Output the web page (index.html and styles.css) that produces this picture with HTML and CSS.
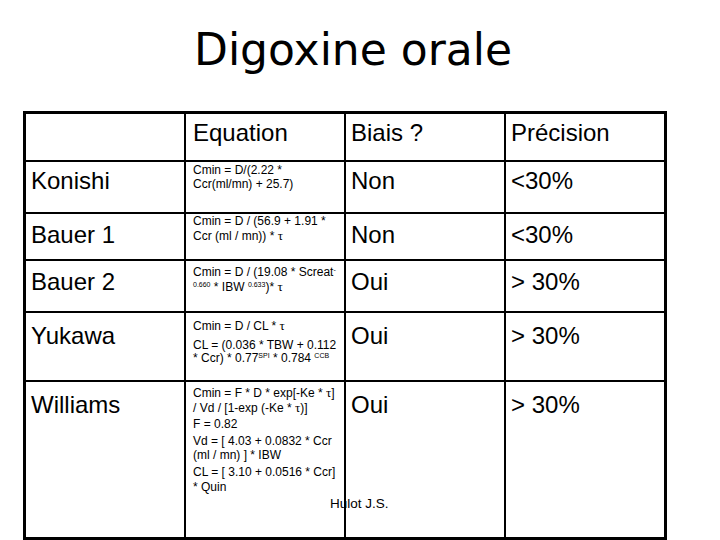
FILE: index.html
```html
<!DOCTYPE html>
<html lang="fr">
<head>
<meta charset="utf-8">
<title>Digoxine orale</title>
<link rel="stylesheet" href="styles.css">
</head>
<body>
<div class="slide">
  <h1 class="title">Digoxine orale</h1>
  <div class="grid">
    <div class="cell big head"></div>
    <div class="cell big head eqcol">Equation</div>
    <div class="cell big head">Biais ?</div>
    <div class="cell big head">Précision</div>

    <div class="cell big row-k">Konishi</div>
    <div class="cell eq eq-k"><p>Cmin = D/(2.22 *<br>Ccr(ml/mn) + 25.7)</p></div>
    <div class="cell big row-k">Non</div>
    <div class="cell big row-k">&lt;30%</div>

    <div class="cell big">Bauer 1</div>
    <div class="cell eq eq-b1"><p>Cmin = D / (56.9 + 1.91 *<br>Ccr (ml / mn)) * <span class="tau">τ</span></p></div>
    <div class="cell big">Non</div>
    <div class="cell big">&lt;30%</div>

    <div class="cell big">Bauer 2</div>
    <div class="cell eq eq-b2"><p>Cmin = D / (19.08 * Screat<sup>-</sup><br><sup>0.660</sup> * IBW <sup>0.633</sup>)* <span class="tau">τ</span></p></div>
    <div class="cell big">Oui</div>
    <div class="cell big">&gt; 30%</div>

    <div class="cell big row-low">Yukawa</div>
    <div class="cell eq eq-y"><p>Cmin = D / CL * <span class="tau">τ</span></p><p class="gap">CL = (0.036 * TBW + 0.112<br>* Ccr) * 0.77<sup>SPI</sup> * 0.784 <sup>CCB</sup></p></div>
    <div class="cell big row-low">Oui</div>
    <div class="cell big row-low">&gt; 30%</div>

    <div class="cell big row-low">Williams</div>
    <div class="cell eq eq-w"><p>Cmin = F * D * exp[-Ke * <span class="tau">τ</span>]<br>/ Vd / [1-exp (-Ke * <span class="tau">τ</span>)]</p><p>F = 0.82</p><p>Vd = [ 4.03 + 0.0832 * Ccr<br>(ml / mn) ] * IBW</p><p>CL = [ 3.10 + 0.0516 * Ccr]<br>* Quin</p></div>
    <div class="cell big row-low">Oui</div>
    <div class="cell big row-low">&gt; 30%</div>
  </div>
  <div class="note">Hulot J.S.</div>
</div>
</body>
</html>
```
FILE: styles.css
```css
html, body {
  margin: 0;
  padding: 0;
  background: #fff;
}
body {
  width: 720px;
  height: 540px;
  overflow: hidden;
  color: #000;
  font-family: "Liberation Sans", Arial, sans-serif;
}
.slide {
  position: relative;
  width: 720px;
  height: 540px;
}
.title {
  margin: 0;
  padding: 25px 0 0 194px;
  height: 50px;
  font-family: "DejaVu Sans", Verdana, sans-serif;
  font-weight: normal;
  font-size: 44px;
  line-height: 50px;
  white-space: nowrap;
}
.grid {
  box-sizing: border-box;
  margin: 36px 0 0 23px;
  width: 644px;
  height: 429px;
  border: 3px solid #000;
  display: grid;
  grid-template-columns: 160px 160px 160px 158px;
  grid-template-rows: 48px 52px 47px 52px 69px 155px;
}
.cell {
  box-sizing: border-box;
  border-right: 2px solid #000;
  border-bottom: 2px solid #000;
  padding: 0 0 0 5px;
  overflow: visible;
}
.cell:nth-child(4n) {
  border-right: none;
}
.cell:nth-last-child(-n+4) {
  border-bottom: none;
}
.big {
  font-size: 24px;
  line-height: 28px;
  padding-top: 7px;
  white-space: nowrap;
}
.big.head {
  padding-top: 5px;
}
.big.row-k {
  padding-top: 5px;
}
.big.row-low {
  padding-top: 9px;
}
.eqcol {
  padding-left: 7px;
}
.eq {
  padding: 3px 0 0 7px;
  font-size: 12px;
  line-height: 13.5px;
  white-space: nowrap;
}
.eq p {
  margin: 0;
}
.eq .gap {
  margin-top: 5px;
}
.eq-k { padding-top: 2px; }
.eq-b1 { padding-top: 1px; }
.eq-b2 { padding-top: 5px; }
.eq-y { padding-top: 6px; }
.eq-w {
  padding-top: 4px;
  line-height: 14.6px;
}
.eq-w p + p {
  margin-top: 2px;
}
.tau {
  font-family: "Liberation Serif", "Times New Roman", serif;
  font-size: 13px;
}
sup {
  font-size: 7px;
  line-height: 0;
  vertical-align: 4px;
}
.note {
  position: absolute;
  left: 330px;
  top: 496px;
  font-size: 13.5px;
  line-height: 15px;
  white-space: nowrap;
}
```
